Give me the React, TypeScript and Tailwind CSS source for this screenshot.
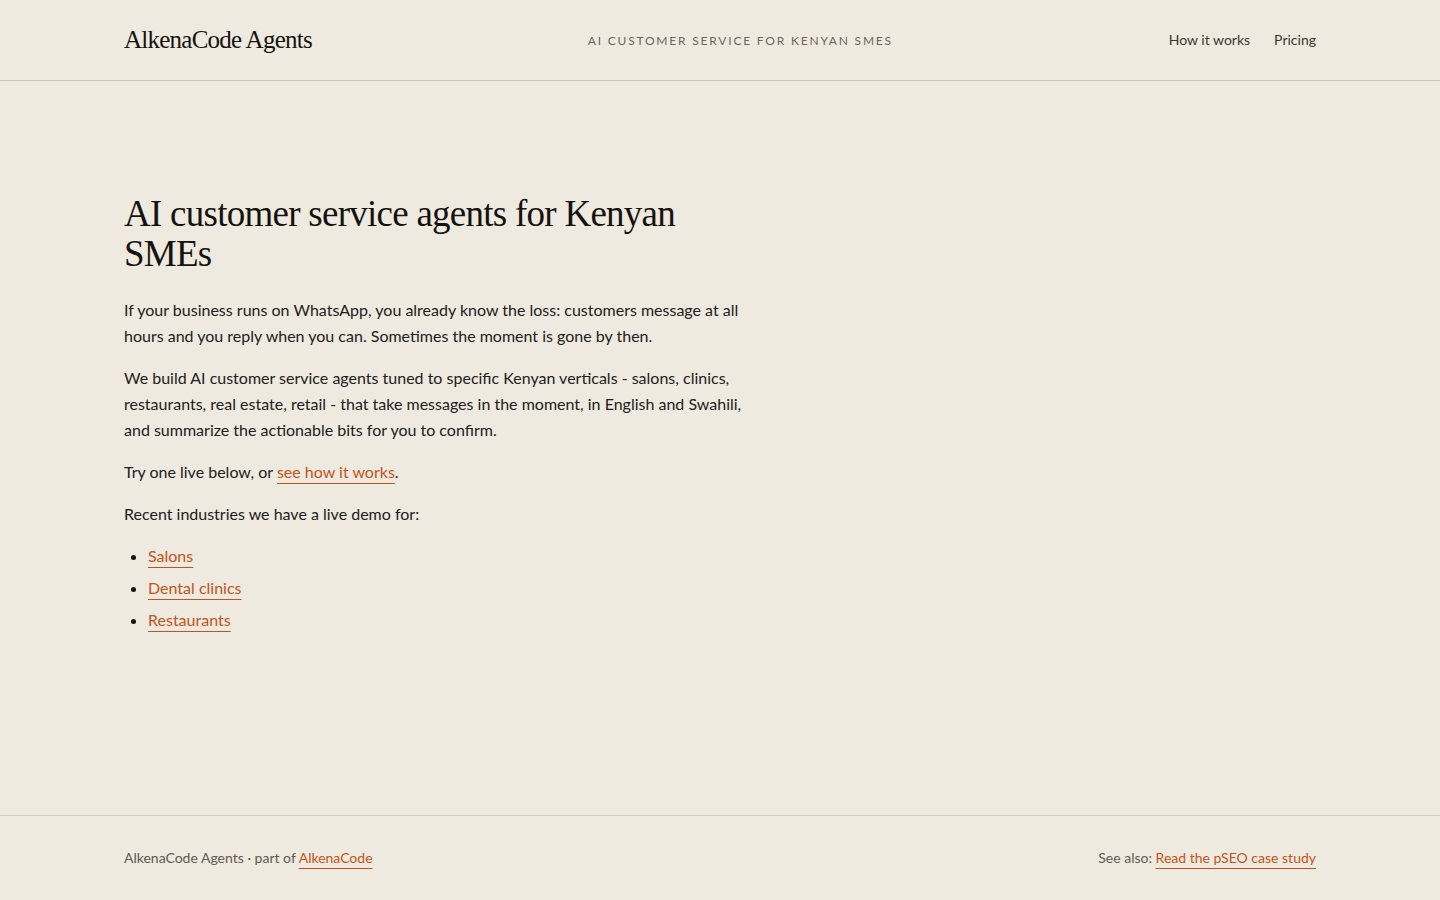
import React from 'react';

const serif = "font-['Liberation_Serif',Georgia,serif]";
const sans = "font-['Lato','Open_Sans',sans-serif]";
const link =
  'text-[#c2541c] underline decoration-[#c2541c] decoration-1 underline-offset-[5px] hover:text-[#9a3f10]';

const industries = ['Salons', 'Dental clinics', 'Restaurants'];

export default function App() {
  return (
    <div className={`min-h-[900px] flex flex-col bg-[#efeadf] text-[#1c1a17] ${sans}`}>
      <header className="border-b border-[#d5c8aa]">
        <div className="mx-auto max-w-[1192px] h-20 flex items-center justify-between">
          <a href="#" className={`${serif} text-[25px] tracking-[-0.03em] text-[#15130f]`}>
            AlkenaCode Agents
          </a>
          <p className="text-xs leading-5 pt-px uppercase tracking-[0.15em] text-[#6d665c]">
            AI customer service for Kenyan SMEs
          </p>
          <nav className="flex items-center gap-6 text-sm text-[#3b3630]">
            <a href="#">How it works</a>
            <a href="#">Pricing</a>
          </nav>
        </div>
      </header>

      <main className="flex-1">
        <div className="mx-auto max-w-[1192px] pt-[113px] pb-16">
          <div className="max-w-[632px]">
            <h1 className={`${serif} text-[37px] leading-[40px] tracking-[-0.02em] text-[#15130f]`}>
              AI customer service agents for Kenyan SMEs
            </h1>
            <div className="mt-[23px] space-y-4 text-base leading-[26px] text-[#22201c]">
              <p>
                If your business runs on WhatsApp, you already know the loss: customers message at all hours
                and you reply when you can. Sometimes the moment is gone by then.
              </p>
              <p>
                We build AI customer service agents tuned to specific Kenyan verticals - salons, clinics,
                restaurants, real estate, retail - that take messages in the moment, in English and Swahili,
                and summarize the actionable bits for you to confirm.
              </p>
              <p>
                Try one live below, or{' '}
                <a href="#" className={link}>
                  see how it works
                </a>
                .
              </p>
              <p>Recent industries we have a live demo for:</p>
              <ul className="list-disc pl-6 space-y-[6px] marker:text-[#15130f]">
                {industries.map((name) => (
                  <li key={name}>
                    <a href="#" className={link}>
                      {name}
                    </a>
                  </li>
                ))}
              </ul>
            </div>
          </div>
        </div>
      </main>

      <footer className="border-t border-[#d3ccbe]">
        <div className="mx-auto max-w-[1192px] h-[84px] flex items-center justify-between text-sm text-[#5f5950]">
          <p>
            AlkenaCode Agents · part of{' '}
            <a href="#" className={link}>
              AlkenaCode
            </a>
          </p>
          <p>
            See also:{' '}
            <a href="#" className={link}>
              Read the pSEO case study
            </a>
          </p>
        </div>
      </footer>
    </div>
  );
}
